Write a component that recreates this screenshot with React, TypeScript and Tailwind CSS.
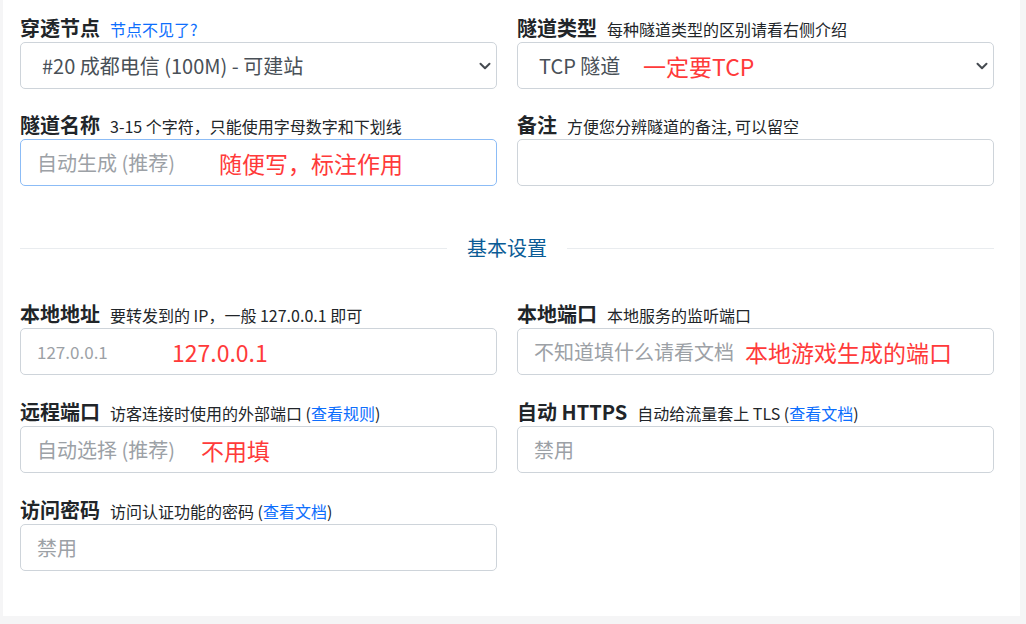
import type { ReactNode } from "react";

const font = { fontFamily: '"Noto Sans CJK SC", "Noto Sans", sans-serif' };

const Field = ({
    label,
    hint,
    children,
}: {
    label: string;
    hint: ReactNode;
    children: ReactNode;
}) => {
    return (
        <div className="flex flex-col">
            <div className="flex items-baseline h-[28px] leading-[28px] text-[#212529]">
                <span className="font-bold text-[20px]">{label}</span>
                <span className="ml-[10px] text-[16px]">{hint}</span>
            </div>
            {children}
        </div>
    );
};

const Link = ({ children }: { children: ReactNode }) => (
    <a className="text-[#0d6efd]" href="#">
        {children}
    </a>
);

const Note = ({ left, children }: { left: number; children: ReactNode }) => (
    <span
        className="absolute top-1/2 -translate-y-1/2 text-[23px] leading-none text-[#ff3a3a] pointer-events-none whitespace-nowrap"
        style={{ left }}
    >
        {children}
    </span>
);

const TextBox = ({
    placeholder,
    focused,
    small,
    note,
    noteLeft,
}: {
    placeholder?: string;
    focused?: boolean;
    small?: boolean;
    note?: string;
    noteLeft?: number;
}) => {
    return (
        <div className="relative">
            <input
                className={
                    "w-full h-[47px] rounded-[5px] border bg-white pl-[16px] outline-none placeholder:text-[#9ca1a6] " +
                    (focused ? "border-[#8cbcf6] " : "border-[#ced4da] ") +
                    (small ? "text-[17px]" : "text-[20px]")
                }
                placeholder={placeholder}
                style={font}
            />
            {note && <Note left={noteLeft ?? 0}>{note}</Note>}
        </div>
    );
};

const SelectBox = ({
    options,
    note,
    noteLeft,
}: {
    options: string[];
    note?: string;
    noteLeft?: number;
}) => {
    return (
        <div className="relative">
            <select
                className="w-full h-[47px] appearance-none rounded-[5px] border border-[#ced4da] bg-white pl-[21px] text-[20px] text-[#495057] outline-none"
                style={font}
            >
                {options.map((o, key) => (
                    <option key={key}>{o}</option>
                ))}
            </select>
            <svg
                className="absolute right-[6px] top-1/2 -translate-y-1/2 pointer-events-none"
                width="12"
                height="8"
                viewBox="0 0 12 8"
                fill="none"
            >
                <path d="M1.5 1.8 6 6.2 10.5 1.8" stroke="#454a50" strokeWidth="2" strokeLinecap="round" strokeLinejoin="round" />
            </svg>
            {note && <Note left={noteLeft ?? 0}>{note}</Note>}
        </div>
    );
};

const App = () => {
    return (
        <div className="flex w-[1026px] h-[624px] overflow-hidden bg-[#f5f5f6]" style={font}>
            <div className="ml-[3px] w-[1017px] h-[616px] bg-white pl-[17px] pr-[26px] pt-[14px]">
                <div className="grid grid-cols-2 gap-x-[20px] gap-y-[22px]">
                    <Field label="穿透节点" hint={<Link>节点不见了?</Link>}>
                        <SelectBox options={["#20 成都电信 (100M) - 可建站"]} />
                    </Field>
                    <Field label="隧道类型" hint="每种隧道类型的区别请看右侧介绍">
                        <SelectBox options={["TCP 隧道"]} note="一定要TCP" noteLeft={126} />
                    </Field>
                    <Field label="隧道名称" hint="3-15 个字符，只能使用字母数字和下划线">
                        <TextBox placeholder="自动生成 (推荐)" focused note="随便写，标注作用" noteLeft={199} />
                    </Field>
                    <Field label="备注" hint="方便您分辨隧道的备注, 可以留空">
                        <TextBox />
                    </Field>
                </div>

                <div className="flex items-center gap-[20px] h-[28px] mt-[48px] mb-[38px]">
                    <div className="flex-1 h-px bg-[#e9ecef]" />
                    <span className="text-[20px] text-[#0b5c96]">基本设置</span>
                    <div className="flex-1 h-px bg-[#e9ecef]" />
                </div>

                <div className="grid grid-cols-2 gap-x-[20px] gap-y-[23px]">
                    <Field label="本地地址" hint="要转发到的 IP，一般 127.0.0.1 即可">
                        <TextBox placeholder="127.0.0.1" small note="127.0.0.1" noteLeft={152} />
                    </Field>
                    <Field label="本地端口" hint="本地服务的监听端口">
                        <TextBox placeholder="不知道填什么请看文档" note="本地游戏生成的端口" noteLeft={228} />
                    </Field>
                    <Field
                        label="远程端口"
                        hint={
                            <>
                                访客连接时使用的外部端口 (<Link>查看规则</Link>)
                            </>
                        }
                    >
                        <TextBox placeholder="自动选择 (推荐)" note="不用填" noteLeft={181} />
                    </Field>
                    <Field
                        label="自动 HTTPS"
                        hint={
                            <>
                                自动给流量套上 TLS (<Link>查看文档</Link>)
                            </>
                        }
                    >
                        <TextBox placeholder="禁用" />
                    </Field>
                    <Field
                        label="访问密码"
                        hint={
                            <>
                                访问认证功能的密码 (<Link>查看文档</Link>)
                            </>
                        }
                    >
                        <TextBox placeholder="禁用" />
                    </Field>
                </div>
            </div>
        </div>
    );
};

export default App;
